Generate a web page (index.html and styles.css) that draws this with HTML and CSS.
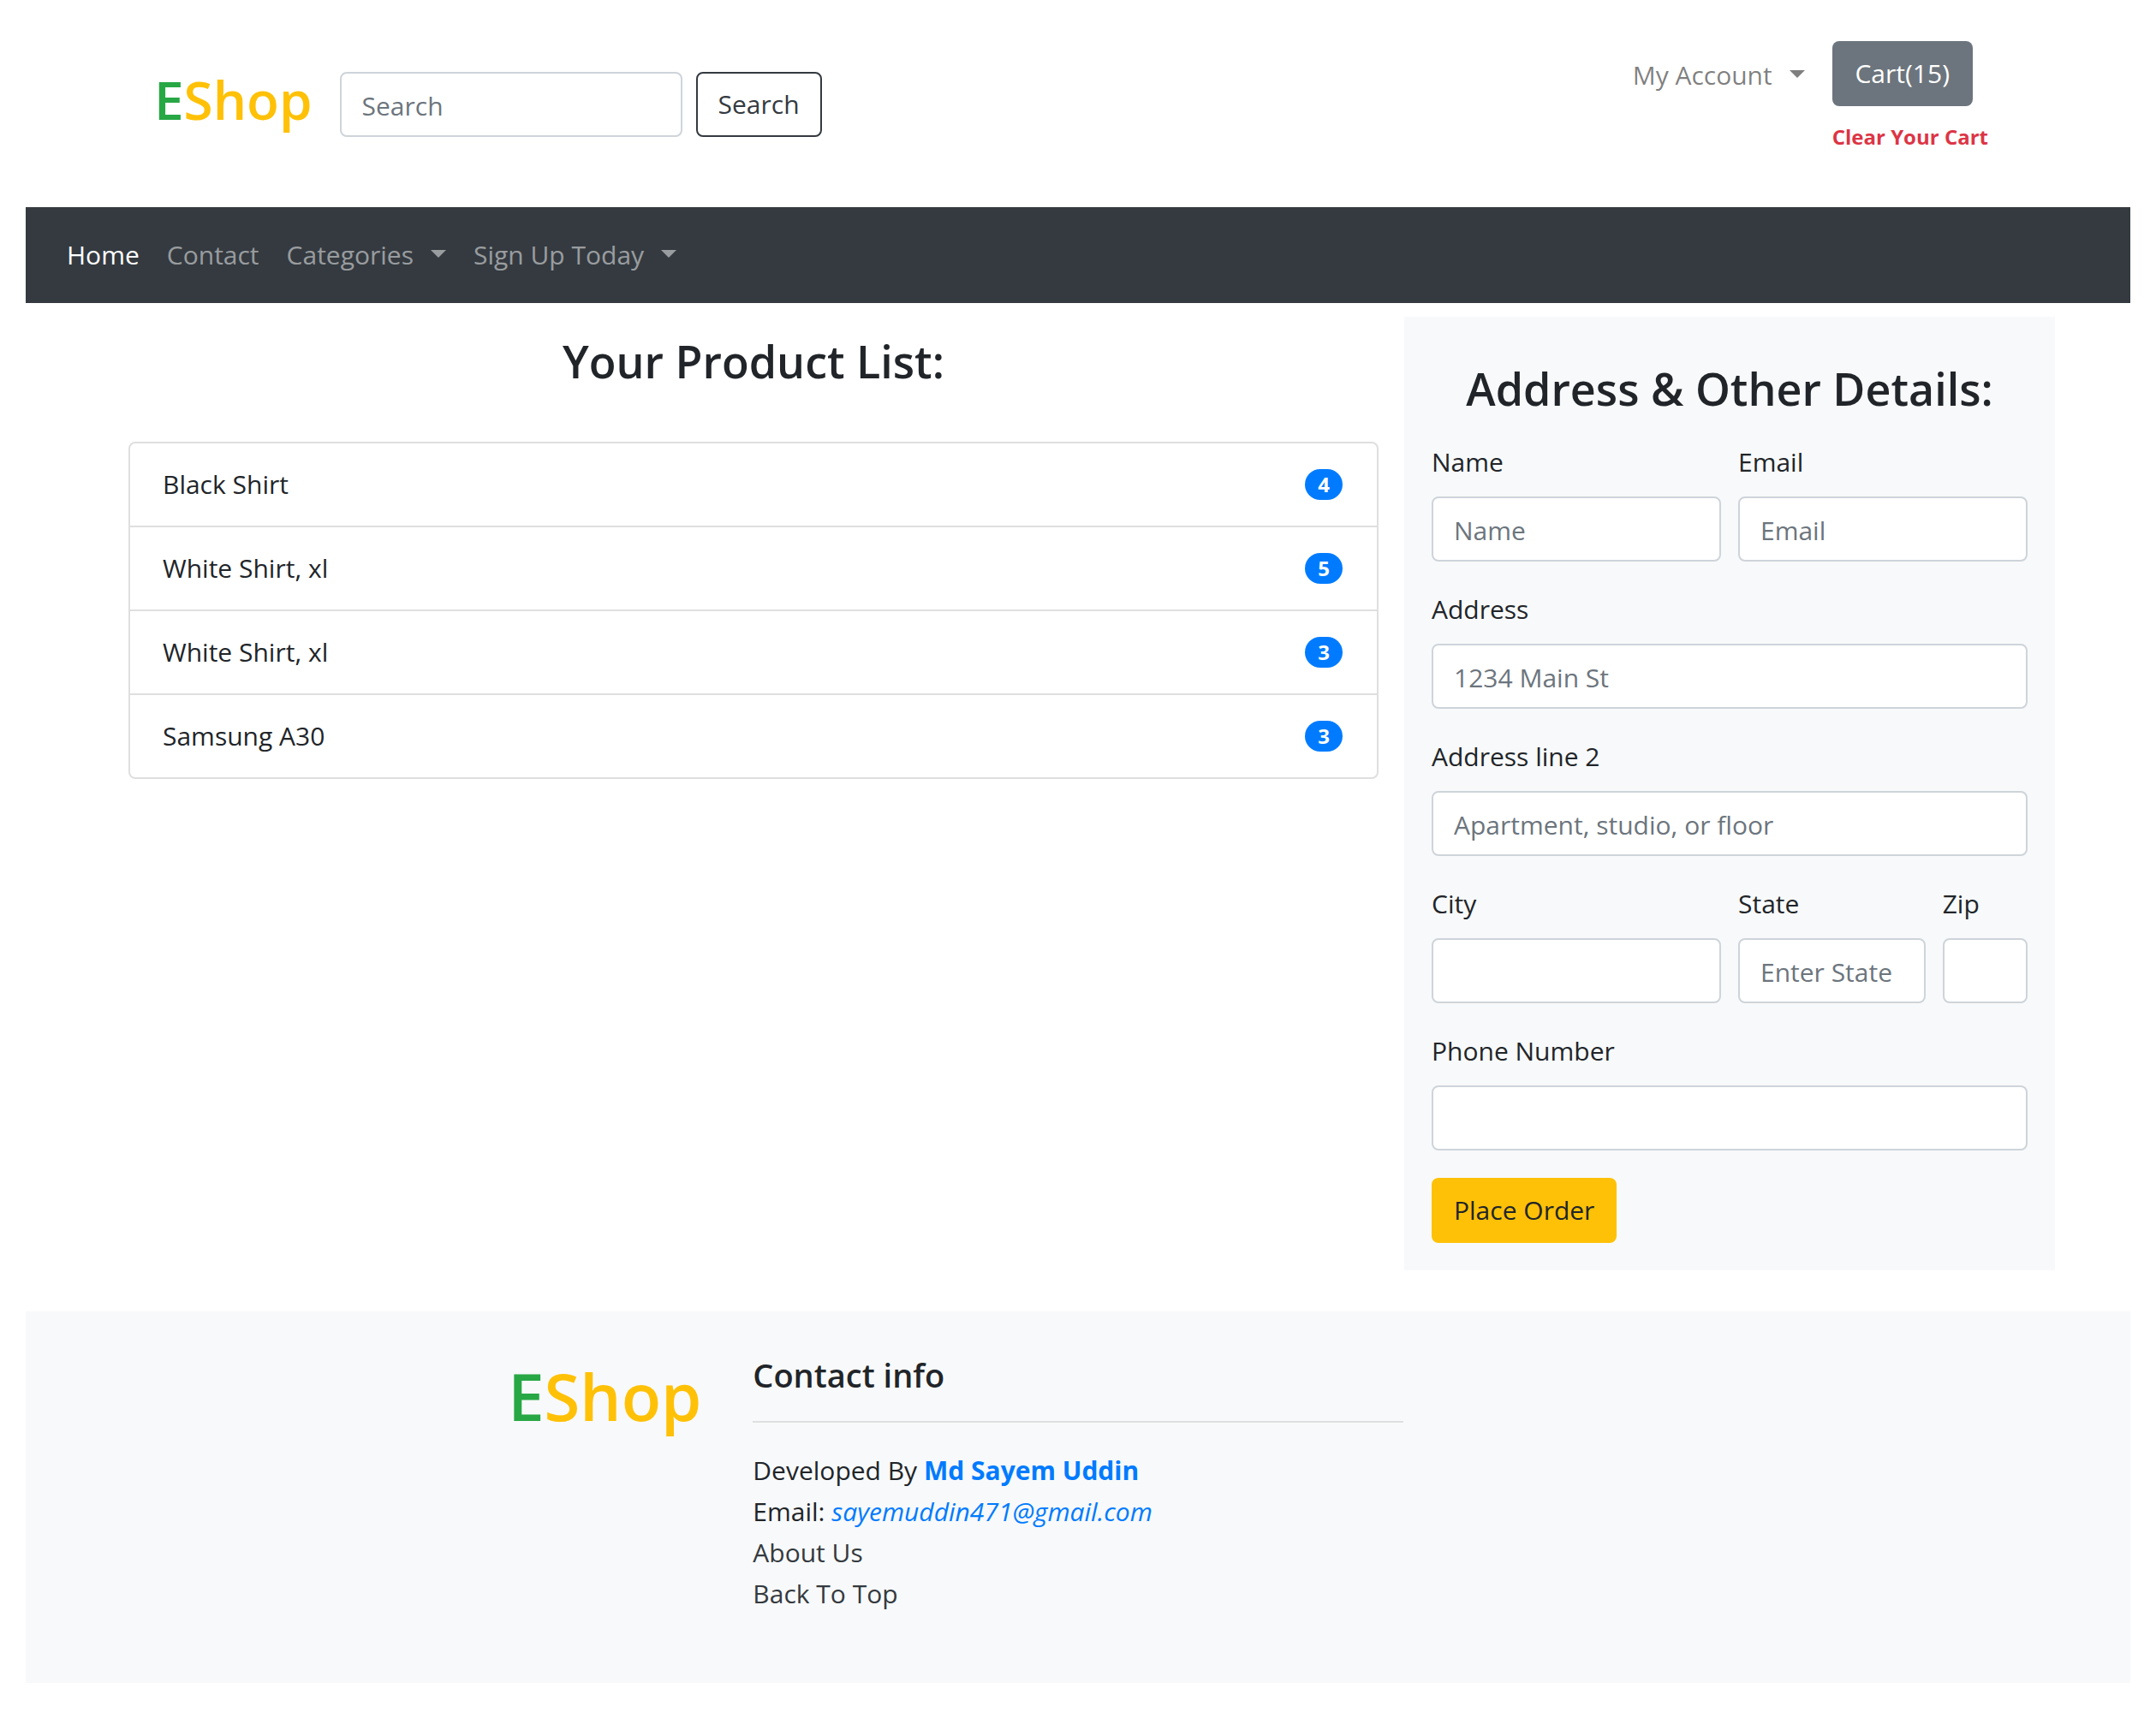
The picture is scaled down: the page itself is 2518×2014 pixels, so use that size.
FILE: index.html
```html
<!DOCTYPE html>
<html lang="en">
<head>
<meta charset="utf-8">
<title>EShop</title>
<link rel="stylesheet" href="styles.css">
</head>
<body>
<header class="top">
  <a class="logo" href="#"><span class="logo-e">E</span>Shop</a>
  <form class="search">
    <input class="field search-field" type="search" placeholder="Search" aria-label="Search">
    <button class="btn btn-outline" type="button">Search</button>
  </form>
  <div class="account">
    <a class="account-link caret" href="#">My Account</a>
    <div class="cart">
      <button class="btn btn-cart" type="button">Cart(15)</button>
      <a class="clear" href="#">Clear Your Cart</a>
    </div>
  </div>
</header>
<nav class="nav">
  <a class="nav-link active" href="#">Home</a>
  <a class="nav-link" href="#">Contact</a>
  <a class="nav-link caret" href="#">Categories</a>
  <a class="nav-link caret" href="#">Sign Up Today</a>
</nav>
<main class="main">
  <section class="products">
    <h2 class="title">Your Product List:</h2>
    <ul class="list">
      <li class="item">Black Shirt <span class="badge">4</span></li>
      <li class="item">White Shirt, xl <span class="badge">5</span></li>
      <li class="item">White Shirt, xl <span class="badge">3</span></li>
      <li class="item">Samsung A30 <span class="badge">3</span></li>
    </ul>
  </section>
  <section class="panel">
    <h2 class="title">Address &amp; Other Details:</h2>
    <form class="form">
      <div class="group half"><label for="name">Name</label><input class="field" id="name" type="text" placeholder="Name"></div>
      <div class="group half"><label for="email">Email</label><input class="field" id="email" type="email" placeholder="Email"></div>
      <div class="group"><label for="address">Address</label><input class="field" id="address" type="text" placeholder="1234 Main St"></div>
      <div class="group"><label for="address2">Address line 2</label><input class="field" id="address2" type="text" placeholder="Apartment, studio, or floor"></div>
      <div class="group half"><label for="city">City</label><input class="field" id="city" type="text"></div>
      <div class="group third"><label for="state">State</label><input class="field" id="state" type="text" placeholder="Enter State"></div>
      <div class="group sixth"><label for="zip">Zip</label><input class="field" id="zip" type="text"></div>
      <div class="group"><label for="phone">Phone Number</label><input class="field" id="phone" type="tel"></div>
      <div class="group"><button class="btn btn-order" type="button">Place Order</button></div>
    </form>
  </section>
</main>
<footer class="footer">
  <a class="logo logo-large" href="#"><span class="logo-e">E</span>Shop</a>
  <div class="contact">
    <h5 class="subtitle">Contact info</h5>
    <hr class="rule">
    <ul class="links">
      <li>Developed By <a class="author" href="#">Md Sayem Uddin</a></li>
      <li>Email: <a class="mail" href="#">sayemuddin471@gmail.com</a></li>
      <li><a class="plain" href="#">About Us</a></li>
      <li><a class="plain" href="#">Back To Top</a></li>
    </ul>
  </div>
</footer>
</body>
</html>
```
FILE: styles.css
```css
* { box-sizing: border-box; }
body {
  margin: 0;
  padding: 0 30px 48px;
  background: #fff;
  color: #212529;
  font: 400 30px/48px "Open Sans", "Noto Sans", sans-serif;
}
a { text-decoration: none; }
h2, h5, ul { margin: 0; padding: 0; font-weight: 600; }
ul { list-style: none; font-weight: 400; }

.top {
  display: flex;
  align-items: flex-start;
  padding: 48px 166px 0 150px;
  min-height: 242px;
}
.logo {
  margin-top: 20px;
  color: #ffc107;
  font-size: 62px;
  line-height: 96px;
  font-weight: 600;
}
.logo-e { color: #28a745; }
.search { display: flex; gap: 16px; margin: 36px 0 0 32px; }
.field {
  display: block;
  width: 100%;
  height: 76px;
  padding: 2px 24px 0;
  border: 2px solid #ced4da;
  border-radius: 8px;
  background: #fff;
  color: #495057;
  font: inherit;
}
.field::placeholder { color: #6c757d; opacity: 1; }
.search-field { width: 400px; }
.btn {
  height: 76px;
  padding: 0 24px;
  border: 2px solid transparent;
  border-radius: 8px;
  font: inherit;
}
.btn-outline { background: #fff; border-color: #343a40; color: #343a40; }
.btn-cart { min-width: 164px; background: #6c757d; color: #fff; }
.btn-order { background: #ffc107; color: #212529; }
.account { display: flex; gap: 32px; margin-left: auto; }
.account-link { margin-top: 16px; color: rgba(0, 0, 0, .5); }
.caret::after {
  content: "";
  display: inline-block;
  margin-left: 20px;
  vertical-align: 8px;
  border: 9px solid transparent;
  border-top-color: currentColor;
  border-bottom: 0;
}
.cart { display: flex; flex-direction: column; align-items: flex-start; gap: 12px; }
.clear { color: #dc3545; font-size: 24px; font-weight: 700; }

.nav {
  display: flex;
  padding: 32px;
  background: #343a40;
}
.nav-link { padding: 0 16px; color: rgba(255, 255, 255, .5); }
.nav-link.active { color: #fff; }

.main {
  display: grid;
  grid-template-columns: 2fr 1fr;
  padding: 16px 88px 48px 90px;
}
.title { font-size: 52px; line-height: 68px; text-align: center; }
.products { padding: 18px 30px 0; }
.list {
  margin-top: 60px;
  border: 2px solid #dfdfdf;
  border-radius: 8px;
}
.item {
  display: flex;
  align-items: center;
  justify-content: space-between;
  height: 98px;
  padding: 0 40px 0 38px;
}
.item:first-child { height: 96px; }
.item + .item { border-top: 2px solid #dfdfdf; }
.badge {
  width: 44px;
  border-radius: 18px;
  background: #007bff;
  color: #fff;
  font-size: 24px;
  line-height: 36px;
  font-weight: 700;
  text-align: center;
}
.panel { padding: 50px 32px 32px; background: #f8f9fa; }
.form {
  display: grid;
  grid-template-columns: repeat(12, minmax(0, 1fr));
  gap: 32px 20px;
  margin-top: 28px;
}
.group { grid-column: span 12; display: grid; gap: 16px; justify-items: start; }
.half { grid-column: span 6; }
.third { grid-column: span 4; }
.sixth { grid-column: span 2; }

.footer {
  display: grid;
  grid-template-columns: repeat(3, 1fr);
  padding: 48px 0 80px;
  background: #f8f9fa;
}
.logo-large { margin: 0; padding-right: 30px; text-align: right; font-size: 76px; line-height: 102px; }
.contact { padding: 0 30px; }
.subtitle { font-size: 38px; line-height: 52px; }
.rule { height: 2px; margin: 28px 0 32px; border: 0; background: #dfdfdf; }
.author { color: #007bff; font-weight: 700; }
.mail { color: #007bff; font-style: italic; }
.plain { color: #343a40; }
```
